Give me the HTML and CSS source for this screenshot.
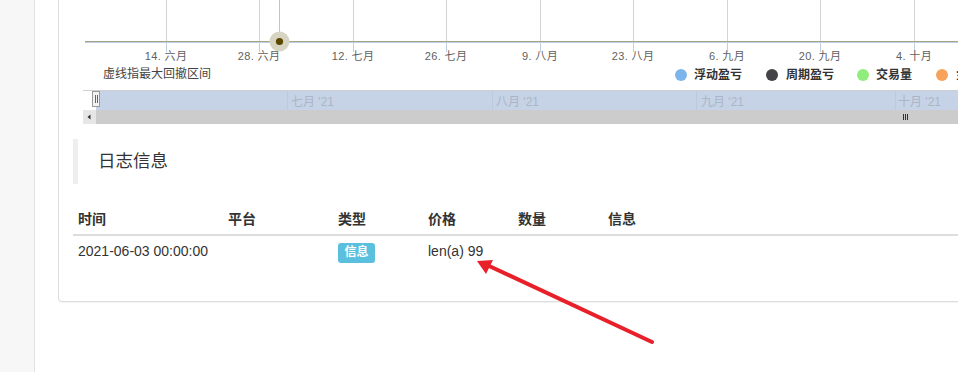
FILE: index.html
```html
<!DOCTYPE html>
<html lang="zh">
<head>
<meta charset="utf-8">
<title>日志信息</title>
<link rel="stylesheet" href="styles.css">
</head>
<body>
<div class="layout">
  <aside class="sidebar"></aside>
  <main class="main">
    <section class="card">
      <svg class="chart" width="900" height="139" viewBox="0 0 900 139" xmlns="http://www.w3.org/2000/svg">
        <g class="grid" stroke="#d4d4d4" stroke-width="1">
          <line x1="93.5" y1="0" x2="93.5" y2="42"/>
          <line x1="186.5" y1="0" x2="186.5" y2="42"/>
          <line x1="280.5" y1="0" x2="280.5" y2="42"/>
          <line x1="373.5" y1="0" x2="373.5" y2="42"/>
          <line x1="467.5" y1="0" x2="467.5" y2="42"/>
          <line x1="560.5" y1="0" x2="560.5" y2="42"/>
          <line x1="654.5" y1="0" x2="654.5" y2="42"/>
          <line x1="747.5" y1="0" x2="747.5" y2="42"/>
          <line x1="841.5" y1="0" x2="841.5" y2="42"/>
        </g>
        <line x1="206.5" y1="0" x2="206.5" y2="41" stroke="#c4c4c4" stroke-width="1"/>
        <line x1="12" y1="42.5" x2="900" y2="42.5" stroke="#c0d0e0" stroke-width="1"/>
        <line x1="12" y1="41.5" x2="900" y2="41.5" stroke="#a6a486" stroke-width="1"/>
        <g class="ticks" stroke="#c0d0e0" stroke-width="1">
          <line x1="93.5" y1="42" x2="93.5" y2="52"/>
          <line x1="186.5" y1="42" x2="186.5" y2="52"/>
          <line x1="280.5" y1="42" x2="280.5" y2="52"/>
          <line x1="373.5" y1="42" x2="373.5" y2="52"/>
          <line x1="467.5" y1="42" x2="467.5" y2="52"/>
          <line x1="560.5" y1="42" x2="560.5" y2="52"/>
          <line x1="654.5" y1="42" x2="654.5" y2="52"/>
          <line x1="747.5" y1="42" x2="747.5" y2="52"/>
          <line x1="841.5" y1="42" x2="841.5" y2="52"/>
        </g>
        <g class="tick-labels" text-anchor="middle">
          <text x="93" y="60">14. 六月</text>
          <text x="186" y="60">28. 六月</text>
          <text x="280" y="60">12. 七月</text>
          <text x="373" y="60">26. 七月</text>
          <text x="467" y="60">9. 八月</text>
          <text x="560" y="60">23. 八月</text>
          <text x="654" y="60">6. 九月</text>
          <text x="747" y="60">20. 九月</text>
          <text x="841" y="60">4. 十月</text>
        </g>
        <circle cx="206.5" cy="41.5" r="10" fill="#d8d4c4"/>
        <circle cx="206.5" cy="41.5" r="3.6" fill="#5a4800"/>
        <text class="note" x="30" y="78">虚线指最大回撤区间</text>
        <g class="legend">
          <circle cx="608" cy="75" r="6" fill="#7cb5ec"/>
          <text x="621" y="79">浮动盈亏</text>
          <circle cx="699" cy="75" r="6" fill="#434348"/>
          <text x="713" y="79">周期盈亏</text>
          <circle cx="790" cy="75" r="6" fill="#90ed7d"/>
          <text x="803" y="79">交易量</text>
          <circle cx="869" cy="75" r="6" fill="#f7a35c"/>
          <text x="883" y="79">金额</text>
        </g>
        <line x1="10" y1="90.5" x2="900" y2="90.5" stroke="#cfcfcf" stroke-width="1"/>
        <rect x="23" y="91" width="877" height="19" fill="#c6d3e6"/>
        <g class="nav-sep" stroke="#bccadf" stroke-width="1">
          <line x1="214.5" y1="91" x2="214.5" y2="110"/>
          <line x1="419.5" y1="91" x2="419.5" y2="110"/>
          <line x1="623.5" y1="91" x2="623.5" y2="110"/>
          <line x1="822.5" y1="91" x2="822.5" y2="110"/>
        </g>
        <g class="nav-labels">
          <text x="218" y="106">七月 '21</text>
          <text x="423" y="106">八月 '21</text>
          <text x="628" y="106">九月 '21</text>
          <text x="825" y="106">十月 '21</text>
        </g>
        <rect x="19.5" y="91.5" width="7" height="15" fill="#f2f2f2" stroke="#999" stroke-width="1"/>
        <line x1="22.5" y1="95" x2="22.5" y2="103" stroke="#666" stroke-width="1"/>
        <line x1="24.5" y1="95" x2="24.5" y2="103" stroke="#666" stroke-width="1"/>
        <rect x="10" y="110" width="890" height="14" fill="#cccccc"/>
        <rect x="10" y="110" width="13" height="14" fill="#e6e6e6"/>
        <path d="M14.5 117 L17.5 114.5 L17.5 119.5 Z" fill="#333"/>
        <g stroke="#333" stroke-width="1">
          <line x1="830.5" y1="114" x2="830.5" y2="120"/>
          <line x1="832.5" y1="114" x2="832.5" y2="120"/>
          <line x1="834.5" y1="114" x2="834.5" y2="120"/>
        </g>
      </svg>

      <blockquote class="section-title">日志信息</blockquote>

      <table class="log-table">
        <thead>
          <tr>
            <th class="col-time">时间</th>
            <th class="col-platform">平台</th>
            <th class="col-type">类型</th>
            <th class="col-price">价格</th>
            <th class="col-amount">数量</th>
            <th>信息</th>
          </tr>
        </thead>
        <tbody>
          <tr>
            <td>2021-06-03 00:00:00</td>
            <td></td>
            <td><span class="badge">信息</span></td>
            <td>len(a) 99</td>
            <td></td>
            <td></td>
          </tr>
        </tbody>
      </table>
    </section>
  </main>
</div>
<svg class="annotation" width="958" height="372" viewBox="0 0 958 372" xmlns="http://www.w3.org/2000/svg">
  <line x1="652" y1="342" x2="487" y2="265" stroke="#e8202a" stroke-width="4" stroke-linecap="round"/>
  <polygon points="477,261 493,260 486,274" fill="#e8202a"/>
</svg>
</body>
</html>
```

FILE: styles.css
```css
html, body {
  margin: 0;
  padding: 0;
  background: #ffffff;
  width: 958px;
  height: 372px;
  overflow: hidden;
  font-family: "Liberation Sans", "Noto Sans CJK SC", Arial, sans-serif;
  font-size: 14px;
  line-height: 1.42857;
  color: #333333;
}

.layout {
  display: flex;
  height: 372px;
}

.sidebar {
  width: 34px;
  flex: 0 0 34px;
  background: #f7f7f7;
  border-right: 1px solid #e2e2e2;
}

.main {
  flex: 1 1 auto;
  overflow: hidden;
  padding-left: 23px;
}

.card {
  width: 940px;
  margin-top: -16px;
  border: 1px solid #dddddd;
  border-radius: 4px;
  box-shadow: 0 1px 1px rgba(0, 0, 0, 0.05);
  padding: 15px 14px;
  background: #ffffff;
}

.chart {
  display: block;
  font-family: "Liberation Sans", "Noto Sans CJK SC", sans-serif;
}

.tick-labels text {
  font-size: 11px;
  letter-spacing: 0.4px;
  fill: #606060;
}

.note {
  font-size: 12px;
  fill: #444444;
}

.legend text {
  font-size: 12px;
  font-weight: bold;
  fill: #333333;
}

.nav-labels text {
  font-size: 12px;
  fill: #abb5c6;
}

.section-title {
  margin: 0 0 20px 0;
  padding: 10px 20px;
  border-left: 5px solid #eeeeee;
  font-size: 17.5px;
  line-height: 25px;
  color: #333333;
}

.log-table {
  width: 885px;
  border-collapse: separate;
  border-spacing: 0;
  margin-bottom: 20px;
}

.log-table th {
  text-align: left;
  font-weight: bold;
  padding: 5px;
  line-height: 20px;
  border-bottom: 2px solid #dddddd;
}

.log-table td {
  padding: 5px;
  line-height: 20px;
  height: 20px;
}

.col-time { width: 140px; }
.col-platform { width: 100px; }
.col-type { width: 80px; }
.col-price { width: 80px; }
.col-amount { width: 80px; }

.badge {
  display: inline;
  padding: 0.2em 0.55em 0.3em;
  font-size: 12px;
  font-weight: bold;
  line-height: 1;
  color: #ffffff;
  background: #5bc0de;
  border-radius: 0.25em;
  white-space: nowrap;
  vertical-align: baseline;
}

.annotation {
  position: absolute;
  left: 0;
  top: 0;
  pointer-events: none;
}
```
